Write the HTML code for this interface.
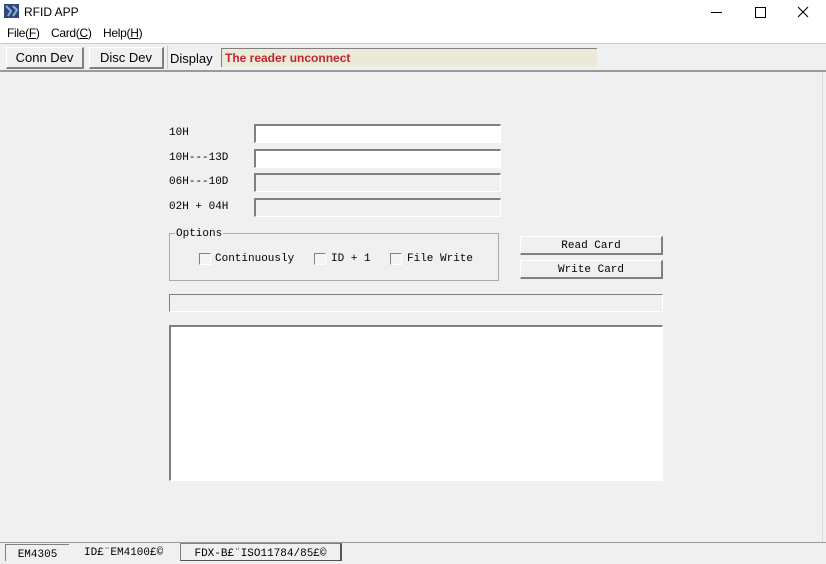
<!DOCTYPE html>
<html><head><style>
body{margin:0;width:826px;height:564px;position:relative;overflow:hidden;background:#f0f0f0;font-family:"Liberation Sans",sans-serif;}
.a{position:absolute}
.m{font-family:"Liberation Mono","Noto Sans CJK SC",monospace;font-size:11px;color:#000}
.fld{position:absolute;border-top:2px solid #808080;border-left:2px solid #808080;border-right:1px solid #fff;border-bottom:1px solid #fff;box-sizing:border-box}
.btn{position:absolute;box-sizing:border-box;border-top:1px solid #fff;border-left:1px solid #fff;border-right:2px solid #808080;border-bottom:2px solid #808080;background:#f0f0f0;text-align:center}
.cb{position:absolute;width:10px;height:10px;border-top:1px solid #808080;border-left:1px solid #808080;border-right:1px solid #fff;border-bottom:1px solid #fff;background:#f4f4f4}
</style></head><body>
<div class="a" style="left:0;top:0;width:826px;height:43px;background:#fff"></div>
<svg class="a" style="left:4px;top:4px" width="15" height="14"><rect width="15" height="14" fill="#2a4a7a"/><path d="M2 2l5 5-3 5M9 2l4 4-4 6" stroke="#9ac" stroke-width="2" fill="none"/></svg>
<div class="a" style="left:24px;top:5px;font-size:12px">RFID APP</div>
<div class="a" style="left:711px;top:12px;width:11px;height:1px;background:#000"></div>
<div class="a" style="left:755px;top:7px;width:9px;height:9px;border:1px solid #000"></div>
<svg class="a" style="left:797px;top:6px" width="12" height="12"><path d="M1 1l10 10M11 1L1 11" stroke="#000" stroke-width="1.1"/></svg>
<div class="a" style="left:7px;top:26px;font-size:12px;letter-spacing:-0.3px">File(<u>F</u>)</div>
<div class="a" style="left:51px;top:26px;font-size:12px;letter-spacing:-0.3px">Card(<u>C</u>)</div>
<div class="a" style="left:103px;top:26px;font-size:12px;letter-spacing:-0.3px">Help(<u>H</u>)</div>
<div class="a" style="left:0;top:43px;width:826px;height:1px;background:#ccc"></div>
<div class="btn" style="left:6px;top:47px;width:78px;height:22px;font-size:13px;line-height:20px">Conn Dev</div>
<div class="btn" style="left:89px;top:47px;width:75px;height:22px;font-size:13px;line-height:20px">Disc Dev</div>
<div class="a" style="left:167px;top:46px;width:1px;height:23px;background:#ccc"></div>
<div class="a" style="left:170px;top:51px;font-size:13px">Display</div>
<div class="a" style="left:221px;top:48px;width:376px;height:19px;background:#ece9d8;border-top:1px solid #808080;border-left:1px solid #808080;box-sizing:border-box;color:#c0262c;font-weight:bold;font-size:12px;line-height:18px;padding-left:3px">The reader unconnect</div>
<div class="a" style="left:0;top:70px;width:826px;height:2px;background:#999"></div>
<div class="a" style="left:822px;top:72px;width:1px;height:470px;background:#ddd"></div>

<div class="a m" style="left:169px;top:127px">10H</div>
<div class="a m" style="left:169px;top:152px">10H---13D</div>
<div class="a m" style="left:169px;top:176px">06H---10D</div>
<div class="a m" style="left:169px;top:201px">02H + 04H</div>
<div class="fld" style="left:254px;top:124px;width:247px;height:19px;background:#fff"></div>
<div class="fld" style="left:254px;top:149px;width:247px;height:19px;background:#fff"></div>
<div class="fld" style="left:254px;top:173px;width:247px;height:19px"></div>
<div class="fld" style="left:254px;top:198px;width:247px;height:19px"></div>

<div class="a" style="left:169px;top:233px;width:330px;height:48px;border:1px solid #aaa;box-sizing:border-box"></div>
<div class="a m" style="left:175px;top:228px;background:#f0f0f0;padding:0 1px">Options</div>
<div class="cb" style="left:199px;top:253px"></div><div class="a m" style="left:215px;top:253px">Continuously</div>
<div class="cb" style="left:314px;top:253px"></div><div class="a m" style="left:331px;top:253px">ID + 1</div>
<div class="cb" style="left:390px;top:253px"></div><div class="a m" style="left:407px;top:253px">File Write</div>

<div class="btn m" style="left:520px;top:236px;width:143px;height:19px;line-height:18px">Read Card</div>
<div class="btn m" style="left:520px;top:260px;width:143px;height:19px;line-height:18px">Write Card</div>

<div class="fld" style="left:169px;top:294px;width:494px;height:18px;border-width:1px"></div>
<div class="fld" style="left:169px;top:325px;width:494px;height:156px;background:#fff"></div>

<div class="a" style="left:0;top:542px;width:826px;height:1px;background:#999"></div>
<div class="a" style="left:5px;top:544px;width:64px;height:17px;border-top:1px solid #808080;border-left:1px solid #808080;box-sizing:border-box;text-align:center;line-height:15px"><span class="m">EM4305</span></div>
<div class="a m" style="left:84px;top:547px">ID£¨EM4100£©</div>
<div class="a" style="left:180px;top:543px;width:162px;height:18px;border-top:1px solid #808080;border-left:1px solid #808080;border-right:2px solid #555;border-bottom:1px solid #555;box-sizing:border-box;text-align:center;line-height:15px"><span class="m">FDX-B£¨ISO11784/85£©</span></div>
</body></html>
